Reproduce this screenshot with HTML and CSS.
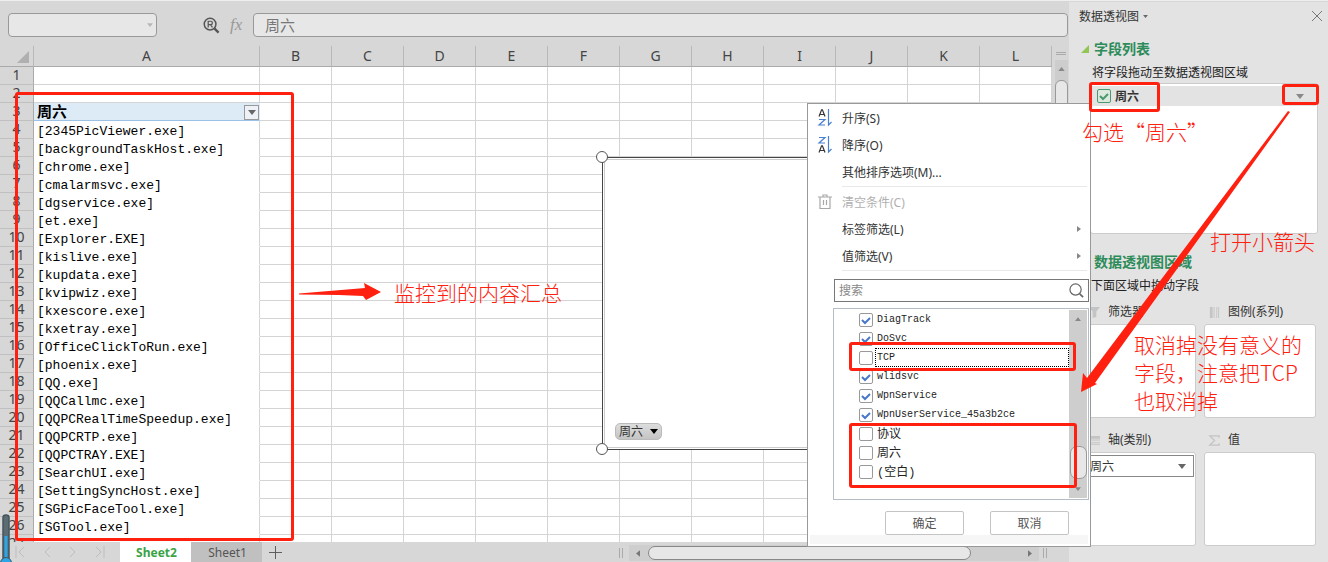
FILE: index.html
```html
<!DOCTYPE html>
<html lang="zh-CN">
<head>
<meta charset="utf-8">
<title>数据透视图</title>
<link rel="stylesheet" href="styles.css">
</head>
<body>
<div class="app">
  <main class="main">
    <div class="formula-bar">
      <div class="name-box">
        <input class="name-input" type="text" aria-label="名称框">
        <svg class="caret caret-pale" viewBox="0 0 8 5"><path d="M0 0h8L4 5z"/></svg>
      </div>
      <svg class="lens" viewBox="0 0 18 18" fill="none" stroke="#555"><circle cx="7.5" cy="7.5" r="6.2" stroke-width="1.6"/><path d="M5.5 11V4.500h2.700a1.700 1.700 0 0 1 0 3.500H5.500M8 8l2 3" stroke-width="1.300"/><path d="M12 12l4.500 4.500" stroke-width="2.400"/></svg>
      <span class="fx">fx</span>
      <input class="formula-input" type="text" value="周六" aria-label="编辑栏">
    </div>

    <div class="sheet">
      <div class="cells">
        <table class="grid">
          <colgroup><col class="col-head"><col class="col-a"><col span="11"></colgroup>
          <thead>
            <tr><th class="corner"><svg viewBox="0 0 12 12"><path d="M12 0v12H0z" fill="#b0b0b0"/></svg></th><th>A</th><th>B</th><th>C</th><th>D</th><th>E</th><th>F</th><th>G</th><th>H</th><th>I</th><th>J</th><th>K</th><th>L</th></tr>
          </thead>
          <tbody id="rows"></tbody>
        </table>
      </div>
      <div class="vscroll">
        <span class="split-h"></span>
        <div class="vtrack">
          <svg class="arrow-up" viewBox="0 0 8 5"><path d="M0 5h8L4 0z"/></svg>
          <span class="vthumb"></span>
        </div>
      </div>
      <div class="chart">
        <div class="chart-inner"></div>
        <span class="handle handle-top"></span>
        <span class="handle handle-bottom"></span>
        <button class="chart-field" type="button">周六<svg class="caret" viewBox="0 0 8 5"><path d="M0 0h8L4 5z"/></svg></button>
      </div>
      <div class="mark mark-names"></div>
      <svg class="arrow-names" viewBox="0 0 84 20"><path d="M0 11.500L66 6L65 1L82 10L67 18L64 14L40 13L0 12.500z"/></svg>
      <p class="note note-names">监控到的内容汇总</p>
    </div>

    <div class="tab-bar">
      <div class="tab-nav">
        <button type="button" aria-label="第一个"><svg viewBox="0 0 12 12"><path d="M1 0v12M9 1L4 6l5 5"/></svg></button>
        <button type="button" aria-label="上一个"><svg viewBox="0 0 12 12"><path d="M9 1L4 6l5 5"/></svg></button>
        <button type="button" aria-label="下一个"><svg viewBox="0 0 12 12"><path d="M3 1l5 5-5 5"/></svg></button>
        <button type="button" aria-label="最后一个"><svg viewBox="0 0 12 12"><path d="M3 1l5 5-5 5M11 0v12"/></svg></button>
      </div>
      <button class="tab tab-active" type="button">Sheet2</button>
      <button class="tab" type="button">Sheet1</button>
      <button class="tab-add" type="button" aria-label="新建工作表"><svg viewBox="0 0 14 14"><path d="M7 0v14M0 7h14"/></svg></button>
      <span class="split-v split-left"></span>
      <div class="htrack">
        <svg class="arrow-side" viewBox="0 0 5 8"><path d="M5 0v8L0 4z"/></svg>
        <span class="hthumb"></span>
        <svg class="arrow-side" viewBox="0 0 5 8"><path d="M0 0v8l5-4z"/></svg>
      </div>
      <span class="split-v"></span>
    </div>
    <svg class="gauge" viewBox="0 0 12 48"><path d="M3 48V3.500Q3 1 6 1T9 3.500V48z" fill="#5d6b72" stroke="#46555d" stroke-width="1.500"/><path d="M4.500 22h3v26h-3z" fill="#2ba6e8"/><circle cx="6" cy="49" r="5.500" fill="#2ba6e8" stroke="#46555d"/></svg>
  </main>

  <aside class="pane">
    <header class="pane-title">
      <button class="title-button" type="button">数据透视图<svg class="caret caret-small" viewBox="0 0 8 5"><path d="M0 0h8L4 5z"/></svg></button>
      <button class="close" type="button" aria-label="关闭"><svg viewBox="0 0 10 10"><path d="M0 0l10 10M10 0L0 10"/></svg></button>
    </header>
    <h2 class="section"><svg viewBox="0 0 8 8"><path d="M8 0v8H0z" fill="#92c552"/></svg>字段列表</h2>
    <p class="hint">将字段拖动至数据透视图区域</p>
    <div class="field-list">
      <div class="field-row">
        <label class="field"><span class="tick tick-green"><input type="checkbox" checked><svg viewBox="0 0 14 14"><path d="M3 7l3 3 5-5"/></svg></span>周六</label>
        <button class="field-menu" type="button" aria-label="打开筛选"><svg class="caret" viewBox="0 0 8 5"><path d="M0 0h8L4 5z"/></svg></button>
      </div>
    </div>
    <h2 class="section section-areas">数据透视图区域</h2>
    <p class="hint hint-areas">下面区域中拖动字段</p>
    <div class="zones">
      <section class="zone">
        <h3><svg viewBox="0 0 12 12"><path d="M0 0h12L8 5v6l-4 1V5z"/></svg>筛选器</h3>
        <div class="drop"></div>
      </section>
      <section class="zone">
        <h3><svg viewBox="0 0 12 12"><path d="M1 0h3v12H1zM5 0h1v12H5zM8 0h1v12H8zM10 0h1v12h-1z"/></svg>图例(系列)</h3>
        <div class="drop"></div>
      </section>
      <section class="zone">
        <h3><svg viewBox="0 0 12 12"><path d="M0 1h12v3H0zM0 5h12v1H0zM0 8h12v1H0zM0 10h12v1H0z"/></svg>轴(类别)</h3>
        <div class="drop">
          <div class="axis-field">
            <select aria-label="轴字段"><option>周六</option></select>
            <svg class="caret" viewBox="0 0 8 5"><path d="M0 0h8L4 5z"/></svg>
          </div>
        </div>
      </section>
      <section class="zone">
        <h3><svg viewBox="0 0 12 12"><path d="M11 3V1H1l5 5-5 5h10V9" fill="none" stroke="#c4c4c4" stroke-width="1.500"/></svg>值</h3>
        <div class="drop"></div>
      </section>
    </div>

    <div class="menu">
      <div class="menu-items">
        <button class="item" type="button"><svg class="sort" viewBox="0 0 14 18" fill="none"><path d="M1 7.500L3.600 .8h.8L7 7.500M2 5.500h4" stroke="#333" stroke-width="1.200"/><path d="M1 10.500h6L1 16h6M10.500 0v16l3-3" stroke="#4a80d0" stroke-width="1.200"/></svg>升序(S)</button>
        <button class="item" type="button"><svg class="sort" viewBox="0 0 14 18" fill="none"><path d="M1 16.500L3.600 9.800h.8L7 16.500M2 14.500h4" stroke="#333" stroke-width="1.200"/><path d="M1 1.500h6L1 7h6M10.500 0v16l3-3" stroke="#4a80d0" stroke-width="1.200"/></svg>降序(O)</button>
        <button class="item" type="button"><span class="sort"></span>其他排序选项(M)...</button>
        <hr class="rule">
        <button class="item item-off" type="button" disabled><svg class="sort" viewBox="0 0 14 18" fill="none" stroke="#a8a8a8" stroke-width="1.200"><path d="M0 4h14M5 4V2h4v2M2 4v11.500h10V4M5.500 7v5M8.500 7v5"/></svg>清空条件(C)</button>
        <button class="item" type="button"><span class="sort"></span>标签筛选(L)<svg class="sub" viewBox="0 0 4 6"><path d="M0 0v6l4-3z"/></svg></button>
        <button class="item" type="button"><span class="sort"></span>值筛选(V)<svg class="sub" viewBox="0 0 4 6"><path d="M0 0v6l4-3z"/></svg></button>
        <hr class="rule">
      </div>
      <div class="search">
        <input type="search" placeholder="搜索" aria-label="搜索">
        <svg viewBox="0 0 16 16" fill="none" stroke="#666"><circle cx="7" cy="7" r="6" stroke-width="1.300"/><path d="M11.500 11.500L15 15" stroke-width="1.800"/></svg>
      </div>
      <div class="values">
        <div class="value-list">
          <label><span class="tick"><input type="checkbox" checked><svg viewBox="0 0 14 14"><path d="M3 7l3 3 5-5"/></svg></span><span class="value">DiagTrack</span></label>
          <label><span class="tick"><input type="checkbox" checked><svg viewBox="0 0 14 14"><path d="M3 7l3 3 5-5"/></svg></span><span class="value">DoSvc</span></label>
          <label><span class="tick"><input type="checkbox"></span><span class="value value-focus">TCP</span></label>
          <label><span class="tick"><input type="checkbox" checked><svg viewBox="0 0 14 14"><path d="M3 7l3 3 5-5"/></svg></span><span class="value">wlidsvc</span></label>
          <label><span class="tick"><input type="checkbox" checked><svg viewBox="0 0 14 14"><path d="M3 7l3 3 5-5"/></svg></span><span class="value">WpnService</span></label>
          <label><span class="tick"><input type="checkbox" checked><svg viewBox="0 0 14 14"><path d="M3 7l3 3 5-5"/></svg></span><span class="value">WpnUserService_45a3b2ce</span></label>
          <label><span class="tick"><input type="checkbox"></span><span class="value value-cjk">协议</span></label>
          <label><span class="tick"><input type="checkbox"></span><span class="value value-cjk">周六</span></label>
          <label><span class="tick"><input type="checkbox"></span><span class="value value-cjk">(空白)</span></label>
        </div>
        <div class="value-scroll">
          <svg viewBox="0 0 8 5"><path d="M0 5h8L4 0z"/></svg>
          <span class="value-thumb"></span>
          <svg viewBox="0 0 8 5"><path d="M0 0h8L4 5z"/></svg>
        </div>
      </div>
      <div class="actions">
        <button type="button">确定</button>
        <button type="button">取消</button>
      </div>
      <div class="menu-foot"></div>
      <div class="mark mark-tcp"></div>
      <div class="mark mark-blank"></div>
    </div>

    <div class="mark mark-field"></div>
    <div class="mark mark-caret"></div>
    <svg class="arrow-long" viewBox="0 0 230 300"><path d="M219 11L221 12L26 283L28 284L12 292L14 273L18 278z"/></svg>
    <p class="note note-check">勾选“周六”</p>
    <p class="note note-open">打开小箭头</p>
    <p class="note note-cancel">取消掉没有意义的<br>字段，注意把TCP<br>也取消掉</p>
  </aside>
</div>
<script src="script.js"></script>
</body>
</html>
```

FILE: styles.css
```css
* { box-sizing: border-box; }

body, h2, h3, p { margin: 0; }

body {
  font-family: "Noto Sans", "Noto Sans CJK SC", sans-serif;
  font-size: 12px;
  color: #333;
  background: #d7d7d7;
}

button, input, select {
  font: inherit;
  color: inherit;
  padding: 0;
  border: 0;
  background: none;
}

svg { display: block; flex: none; overflow: visible; }

.app {
  display: flex;
  height: 100vh;
  min-height: 562px;
  overflow: hidden;
  border-top: 1px solid #eee;
}

.main {
  position: relative;
  flex: 1;
  min-width: 0;
  display: flex;
  flex-direction: column;
}

.caret { width: 8px; height: 5px; fill: #666; }
.caret-pale { fill: #b8b8b8; width: 6px; height: 4px; }
.caret-small { width: 5px; height: 3px; }

/* formula bar */
.formula-bar {
  display: flex;
  align-items: center;
  height: 45px;
  padding: 3px 1px 0 8px;
}

.name-box {
  display: flex;
  align-items: center;
  width: 149px;
  height: 24px;
  padding-right: 3px;
  border: 1px solid #999;
  border-radius: 4px;
  background: #e7e7e7;
}

.name-input { flex: 1; min-width: 0; }
.lens { width: 17px; height: 17px; margin-left: 46px; }

.fx {
  width: 33px;
  padding-left: 10px;
  font: italic 17px/20px "Liberation Serif", serif;
  color: #999;
}

.formula-input {
  flex: 1;
  min-width: 0;
  height: 24px;
  padding: 0 0 2px 11px;
  border: 1px solid #999;
  border-radius: 4px;
  background: #e7e7e7;
  font-size: 15px;
  color: #777;
}

/* worksheet */
.sheet {
  position: relative;
  flex: 1;
  min-height: 0;
  display: flex;
  overflow: hidden;
}

.cells { flex: 1; min-width: 0; overflow: hidden; background: #fff; }

.grid {
  width: 100%;
  table-layout: fixed;
  border-collapse: separate;
  border-spacing: 0;
}

.col-head { width: 34px; }
.col-a { width: 226px; }

.grid th, .grid td {
  height: 18px;
  padding: 0;
  line-height: 17px;
  border-right: 1px solid #d4d4d4;
  border-bottom: 1px solid #d4d4d4;
  white-space: nowrap;
}

.grid th {
  padding-bottom: 2px;
  line-height: 15px;
  background: #d7d7d7;
  border-color: #aaa;
  font-size: 14px;
  font-weight: 400;
  color: #444;
}

.grid thead th { height: 21px; border-right-color: #b8b8b8; }
.grid tbody th { border-bottom-color: #c0c0c0; }
.corner svg { width: 12px; height: 12px; margin: 4px 4px 0 auto; }

.grid .cell-name {
  padding: 4px 0 0 3px;
  line-height: 13px;
  border-bottom-color: #fff;
  font-family: "Liberation Mono", monospace;
  font-size: 13px;
  color: #000;
}

.grid .cell-title {
  padding-left: 3px;
  border-right-color: #ddebf7;
  border-bottom-color: #9bc2e6;
  background: #ddebf7;
  font-size: 15px;
  font-weight: 700;
  color: #000;
}

.title-wrap { display: flex; justify-content: space-between; height: 17px; }

.filter {
  display: grid;
  place-items: center;
  width: 15px;
  height: 15px;
  margin-top: 2px;
  border: 1px solid #999;
  background: #eef2f8;
}

.vscroll { width: 17px; padding: 6px 1px 0 3px; background: #d7d7d7; }
.split-h { display: block; width: 10px; height: 3px; margin-left: 1px; border: solid #aaa; border-width: 1px 0; }
.vtrack { display: flex; flex-direction: column; align-items: center; height: 100%; margin-top: 5px; padding-top: 7px; background: #cdcdcd; }
.arrow-up { width: 7px; height: 4px; fill: #888; }
.vthumb { width: 13px; height: 260px; margin-top: 9px; border: 1px solid #999; border-radius: 6px; background: #e7e7e7; }

/* chart object floating over the cells */
.chart {
  position: absolute;
  left: 602px;
  top: 111px;
  width: 440px;
  height: 293px;
  padding: 1px;
  border: 1px solid #444;
  background: #fff;
}

.chart-inner { height: 100%; border: 1px solid #ccc; }
.handle { position: absolute; left: -7px; width: 12px; height: 12px; border: 1px solid #555; border-radius: 50%; background: #fff; }
.handle-top { top: -7px; }
.handle-bottom { bottom: -6px; }

.chart-field {
  position: absolute;
  left: 12px;
  bottom: 9px;
  display: flex;
  align-items: center;
  justify-content: space-between;
  width: 47px;
  height: 17px;
  padding: 0 3px;
  border: 1px solid #bbb;
  border-radius: 5px;
  background: linear-gradient(#ddd, #c4c4c4);
  line-height: 15px;
}

.chart-field .caret { fill: #000; }

/* sheet tabs */
.tab-bar { display: flex; height: 20px; padding-right: 22px; background: #d7d7d7; }
.tab-nav { display: flex; align-items: center; gap: 14px; width: 120px; padding-left: 15px; }
.tab-nav svg { width: 12px; height: 12px; fill: none; stroke: #bdbdbd; }
.tab { width: 71px; padding-top: 2px; padding-left: 2px; background: #c0c0c0; line-height: 18px; color: #555; }
.tab-active { background: #fff; font-weight: 700; color: #3ba346; }
.tab-add { width: 26px; display: grid; place-items: center; }
.tab-add svg { width: 13px; height: 13px; fill: none; stroke: #555; }
.split-v { width: 4px; height: 10px; margin: 6px 0 0 4px; border: solid #aaa; border-width: 0 1px; }
.split-left { margin-left: auto; }
.htrack { display: flex; align-items: center; width: 410px; height: 16px; margin: 3px 0 0 6px; padding: 0 7px; background: #cecece; }
.hthumb { flex: 1; max-width: 323px; height: 14px; margin: 0 auto 0 8px; border: 1px solid #888; border-radius: 7px; background: #e7e7e7; }
.arrow-side { width: 4px; height: 7px; fill: #777; }
.gauge { position: absolute; left: 0; bottom: 0; width: 12px; height: 48px; }

/* pivot pane */
.pane {
  position: relative;
  width: 259px;
  flex: none;
  padding: 0 12px 0 15px;
  background: #e3e3e3;
  border-top: 1px solid #d7d7d7;
}

.pane-title { display: flex; align-items: center; justify-content: space-between; height: 28px; margin: 0 -6px 0 -5px; }
.title-button { display: flex; align-items: center; gap: 4px; }
.close svg { width: 10px; height: 10px; fill: none; stroke: #777; }

.section {
  display: flex;
  align-items: center;
  gap: 5px;
  height: 22px;
  margin: 8px 0 0 -3px;
  font-size: 14px;
  line-height: 22px;
  color: #2d8c5a;
}

.section svg { width: 8px; height: 8px; }
.hint { height: 20px; margin: 3px 0 0 8px; line-height: 20px; color: #222; }
.field-list { height: 151px; margin: 0 -2px 0 6px; padding: 2px 1px; border: 1px solid #ccc; border-radius: 3px; background: #fff; }
.field-row { display: flex; align-items: center; height: 20px; padding: 0 12px 0 5px; background: #e3e3e3; }
.field { flex: 1; display: flex; align-items: center; gap: 4px; font-weight: 700; }
.field-menu .caret { fill: #888; }
.section-areas { margin: 17px 0 0 10px; }
.hint-areas { margin-left: 7px; }

.zones { display: grid; grid-template-columns: 1fr 1fr; gap: 12px 8px; margin-top: 6px; }
.zone h3 { display: flex; align-items: center; gap: 8px; height: 20px; margin: 0 0 2px 5px; font-size: 12px; font-weight: 400; line-height: 20px; }
.zone h3 svg { width: 11px; height: 11px; fill: #c4c4c4; }
.drop { height: 94px; padding: 2px 1px; border: 1px solid #ccc; border-radius: 3px; background: #fff; }
.axis-field { display: flex; align-items: center; height: 22px; padding: 0 7px 0 3px; border: 1px solid #888; }
.axis-field select { flex: 1; min-width: 0; appearance: none; outline: 0; }

/* check boxes */
.tick { position: relative; display: block; width: 14px; height: 14px; flex: none; }
.tick input { display: block; width: 14px; height: 14px; margin: 0; appearance: none; border: 1px solid #999; border-radius: 2px; background: #fff; }
.tick svg { position: absolute; inset: 0; fill: none; stroke: #4a78c8; stroke-width: 2; pointer-events: none; }
.tick-green input { border-color: #4c9a6c; background: #dce9df; }
.tick-green svg { stroke: #4c9a6c; }

/* filter menu opened over the sheet and the pane */
.menu {
  position: absolute;
  left: -262px;
  top: 101px;
  width: 284px;
  border: 1px solid #999;
  background: #fff;
}

.item { display: flex; align-items: center; width: 100%; height: 27px; padding: 0 9px 0 10px; }
.item-off { color: #b0b0b0; }
.sort { width: 14px; height: 18px; margin-right: 10px; }
.sub { width: 4px; height: 6px; margin-left: auto; fill: #888; }
.rule { height: 1px; margin: 1px 3px 1px 34px; border: 0; background: #e8e8e8; }

.search { display: flex; align-items: center; height: 23px; margin: 8px 1px 0 26px; padding: 0 4px; border: 1px solid #777; }
.search input { flex: 1; min-width: 0; outline: 0; }
.search input::placeholder { color: #888; }
.search svg { width: 15px; height: 15px; }

.values { display: flex; height: 192px; margin: 6px 1px 0 25px; padding: 1px; border: 1px solid #b4bcc6; }
.value-list { flex: 1; padding-left: 24px; }
.value-list label { display: flex; align-items: center; gap: 2px; height: 19px; }
.value { flex: 1; height: 19px; padding-left: 1px; border: 1px solid transparent; font: 10px/17px "Liberation Mono", "Noto Sans CJK SC", monospace; color: #222; }
.value-focus { border: 1px dotted #000; }
.value-cjk { font-size: 12px; line-height: 20px; }
.value-scroll { display: flex; flex-direction: column; align-items: center; width: 18px; padding: 7px 0; background: #cecece; }
.value-scroll svg { width: 6px; height: 4px; fill: #888; }
.value-thumb { width: 17px; height: 33px; margin: auto 0 8px; border: 1px solid #999; border-radius: 7px; background: #e7e7e7; }

.actions { display: flex; justify-content: flex-end; gap: 26px; margin: 11px 21px 0 0; }
.actions button { width: 79px; height: 24px; border: 1px solid #c4c4c4; border-radius: 2px; color: #555; }
.menu-foot { height: 9px; margin: 0 2px 2px; background: #f6f6f6; }

/* annotations */
.mark { position: absolute; border: 3px solid #ff2010; border-radius: 3px; pointer-events: none; }
.mark-names { left: 15px; top: 46px; width: 279px; height: 449px; }
.mark-tcp { left: 41px; top: 238px; width: 227px; height: 29px; }
.mark-blank { left: 41px; top: 319px; width: 228px; height: 65px; }
.mark-field { left: 20px; top: 80px; width: 71px; height: 30px; }
.mark-caret { left: 213px; top: 82px; width: 37px; height: 21px; }
.note { position: absolute; font-family: "Noto Sans CJK SC", sans-serif; font-size: 21px; font-weight: 300; line-height: 28px; white-space: nowrap; color: #ff2010; }
.note-names { left: 394px; top: 232px; }
.note-check { left: 13px; top: 115px; }
.note-open { left: 141px; top: 225px; }
.note-cancel { left: 65px; top: 328px; }
.arrow-names { position: absolute; left: 299px; top: 236px; width: 84px; height: 20px; fill: #ff2010; }
.arrow-long { position: absolute; left: 0; top: 98px; width: 230px; height: 300px; fill: #ff2010; }
```

FILE: script.js
```javascript
const names = [
  "2345PicViewer.exe", "backgroundTaskHost.exe", "chrome.exe", "cmalarmsvc.exe",
  "dgservice.exe", "et.exe", "Explorer.EXE", "kislive.exe", "kupdata.exe",
  "kvipwiz.exe", "kxescore.exe", "kxetray.exe", "OfficeClickToRun.exe",
  "phoenix.exe", "QQ.exe", "QQCallmc.exe", "QQPCRealTimeSpeedup.exe",
  "QQPCRTP.exe", "QQPCTRAY.EXE", "SearchUI.exe", "SettingSyncHost.exe",
  "SGPicFaceTool.exe", "SGTool.exe"
];
const firstNameRow = 4;
const titleCell = '<td class="cell-title"><div class="title-wrap">周六' +
  '<button class="filter" type="button" aria-label="筛选"><svg class="caret" viewBox="0 0 8 5"><path d="M0 0h8L4 5z"/></svg></button></div></td>';

let html = "";
for (let row = 1; row <= 27; row++) {
  const name = names[row - firstNameRow];
  let cell = "<td></td>";
  if (row === 3) cell = titleCell;
  if (row >= firstNameRow) cell = `<td class="cell-name">${name ? `[${name}]` : ""}</td>`;
  html += `<tr><th>${row}</th>${cell}${"<td></td>".repeat(11)}</tr>`;
}
document.getElementById("rows").innerHTML = html;
```
